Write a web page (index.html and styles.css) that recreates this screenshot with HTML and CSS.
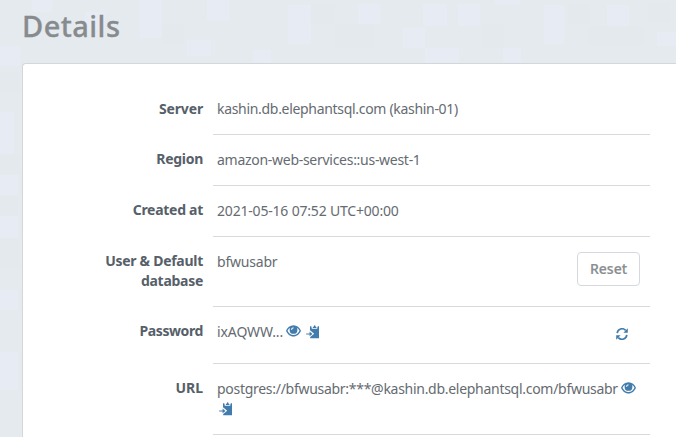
FILE: index.html
```html
<!DOCTYPE html>
<html lang="en">
<head>
<meta charset="utf-8">
<title>Details</title>
<link rel="stylesheet" href="styles.css">
</head>
<body>
<svg class="mosaic" width="676" height="437" aria-hidden="true">
  <g fill="#e7ecf4">
    <rect x="32" y="0" width="20" height="12"/><rect x="140" y="0" width="22" height="38"/><rect x="0" y="46" width="20" height="20"/>
    <rect x="187" y="40" width="24" height="16"/><rect x="207" y="0" width="22" height="20"/><rect x="288" y="5" width="23" height="39"/>
    <rect x="253" y="50" width="18" height="13"/><rect x="358" y="4" width="22" height="20"/><rect x="423" y="4" width="24" height="22"/>
    <rect x="403" y="28" width="22" height="20"/><rect x="425" y="48" width="34" height="15"/><rect x="458" y="4" width="22" height="22"/>
    <rect x="495" y="0" width="25" height="4"/><rect x="544" y="5" width="20" height="39"/><rect x="503" y="48" width="18" height="15"/>
    <rect x="607" y="5" width="22" height="21"/><rect x="657" y="32" width="19" height="14"/><rect x="0" y="112" width="14" height="42"/>
    <rect x="0" y="175" width="18" height="20"/><rect x="0" y="216" width="18" height="22"/><rect x="0" y="290" width="18" height="20"/>
    <rect x="0" y="352" width="18" height="38"/><rect x="85" y="12" width="20" height="18"/>
  </g>
  <g fill="#e4e9ed">
    <rect x="311" y="4" width="24" height="20"/><rect x="335" y="24" width="40" height="24"/><rect x="568" y="4" width="22" height="20"/>
    <rect x="588" y="26" width="56" height="20"/><rect x="648" y="3" width="22" height="20"/><rect x="482" y="24" width="22" height="24"/>
    <rect x="0" y="72" width="20" height="20"/><rect x="0" y="154" width="20" height="20"/><rect x="0" y="196" width="18" height="20"/>
    <rect x="0" y="238" width="20" height="30"/><rect x="162" y="24" width="22" height="20"/>
  </g>
</svg>
<main class="page">
  <h1 class="title">Details</h1>
  <section class="card">
    <dl class="details">
      <div class="row row-server">
        <dt class="label server-label">Server</dt>
        <dd class="value"><span class="server">kashin.db.elephantsql.com (kashin-01)</span></dd>
      </div>
      <div class="row">
        <dt class="label">Region</dt>
        <dd class="value"><span class="region">amazon-web-services::us-west-1</span></dd>
      </div>
      <div class="row">
        <dt class="label">Created at</dt>
        <dd class="value"><span class="created">2021-05-16 07:52 UTC+00:00</span></dd>
      </div>
      <div class="row row-user">
        <dt class="label">User &amp; Default<br>database</dt>
        <dd class="value split"><span class="user">bfwusabr</span><button class="reset" type="button">Reset</button></dd>
      </div>
      <div class="row row-password">
        <dt class="label password-label">Password</dt>
        <dd class="value split">
          <span class="secret"><span class="password">ixAQWW...</span><svg class="icon eye" viewBox="0 0 15 12"><use href="#eye"/></svg><svg class="icon paste" viewBox="0 0 14 14"><use href="#paste"/></svg></span>
          <svg class="icon refresh" viewBox="0 0 12 12"><path d="M1.2 5.2A4.9 4.9 0 0 1 9.7 2.400M10.800 6.800A4.900 4.900 0 0 1 2.300 9.600" fill="none" stroke="currentColor" stroke-width="1.7"/><path d="M11.800.3v4.400H7.400ZM.2 11.700V7.300h4.400Z"/></svg>
        </dd>
      </div>
      <div class="row row-url">
        <dt class="label url-label">URL</dt>
        <dd class="value url-value">
          <div class="url-line"><span class="url">postgres://bfwusabr:***@kashin.db.elephantsql.com/bfwusabr</span><svg class="icon eye" viewBox="0 0 15 12"><use href="#eye"/></svg></div>
          <svg class="icon paste" viewBox="0 0 14 14"><use href="#paste"/></svg>
        </dd>
      </div>
    </dl>
  </section>
</main>
<svg class="symbols" width="0" height="0" aria-hidden="true">
  <symbol id="eye" viewBox="0 0 15 12">
    <path fill-rule="evenodd" d="M7.5.3C11 .3 13.6 2.600 15 5.700 13.600 9 11 11.500 7.500 11.500S1.400 9 0 5.700C1.400 2.600 4 .3 7.500.3ZM4.100 2.700C2.900 3.400 2.100 4.400 1.500 5.700c1.300 2.700 3.500 4.300 6 4.300s4.700-1.600 6-4.300c-.6-1.300-1.500-2.300-2.700-3 .4.7.6 1.400.6 2.200a3.900 3.900 0 0 1-7.800 0c0-.8.100-1.500.5-2.200Z"/>
    <path d="M5.500 4.700c.1-1.200.8-1.800 2-2" fill="none" stroke="#fff" stroke-width="1.100"/>
  </symbol>
  <symbol id="paste" viewBox="0 0 14 14">
    <path d="M4 1.300h1.300l.5 2.400h5.400l.5-2.400H13V13.300H4.200v-1.200L8.200 8.800 4 5.300Z"/>
    <path d="M6.800 2.900c0-1 .4-1.400 1-1.500.1-1.600 1.600-1.600 1.700 0 .6.1 1 .5 1 1.500Z"/>
    <path d="M.2 8.400h3.400V6.600l2.900 2.300-2.900 2.300V9.500H.2Z"/>
  </symbol>
</svg>
</body>
</html>
```

FILE: styles.css
```css
* { box-sizing: border-box; }

body {
  margin: 0;
  height: 437px;
  overflow: hidden;
  background: #e5eaee;
  color: #656b71;
  font-family: "Noto Sans", sans-serif;
  font-size: 14px;
  line-height: 20px;
}

.mosaic {
  position: absolute;
  inset: 0;
}

.symbols { position: absolute; }

.page {
  position: relative;
  display: flex;
  flex-direction: column;
  height: 437px;
  padding: 8px 0 0 22px;
}

.title {
  flex: none;
  margin: 0;
  height: 55px;
  color: #888b8e;
  font-size: 29px;
  font-weight: 500;
  letter-spacing: .45px;
  line-height: 36px;
  -webkit-text-stroke: .3px #888b8e;
}

.card {
  flex: 1;
  min-height: 0;
  padding-top: 20px;
  background: #fff;
  border: 1px solid #d3d7da;
  border-width: 1px 0 0 1px;
  border-radius: 4px 0 0 0;
}

.details { margin: 0; }

.row {
  display: grid;
  grid-template-columns: 180px 437px;
  column-gap: 10px;
  height: 51px;
}

.row-user { height: 70px; }
.row-password { height: 57px; }
.row-url { height: 71px; }

.label {
  padding-top: 14px;
  color: #566069;
  font-weight: 700;
  letter-spacing: -.28px;
  text-align: right;
  white-space: nowrap;
}

.server-label { padding-top: 15px; letter-spacing: -.15px; }
.password-label { letter-spacing: -.4px; }
.url-label { letter-spacing: 0; }

.value {
  margin: 0;
  padding: 15px 10px 0 4px;
  border-bottom: 1px solid #d7dadd;
  white-space: nowrap;
}

.server { letter-spacing: -.31px; }
.region { letter-spacing: -.28px; }
.created { letter-spacing: -.19px; }
.user { letter-spacing: -.2px; }
.password { letter-spacing: -.1px; }
.url { letter-spacing: -.285px; }

.split {
  display: flex;
  justify-content: space-between;
  align-items: flex-start;
}

.reset {
  width: 63px;
  height: 34px;
  padding: 0;
  background: #fff;
  border: 1px solid #d5d9dd;
  border-radius: 4px;
  color: #888d91;
  font: 500 14px/20px "Noto Sans", sans-serif;
  -webkit-text-stroke: .2px #888d91;
}

.secret,
.url-line {
  display: flex;
}

.icon {
  flex: none;
  display: block;
  color: #427cac;
  fill: currentColor;
}

.eye {
  width: 15px;
  height: 12px;
  margin: 3px 0 0 3px;
}

.paste {
  width: 14px;
  height: 14px;
  margin: 3px 0 0 5px;
}

.url-value .paste { margin: 3px 0 0 2px; }

.refresh {
  width: 12px;
  height: 12px;
  margin: 6px 12px 0 0;
}
```
